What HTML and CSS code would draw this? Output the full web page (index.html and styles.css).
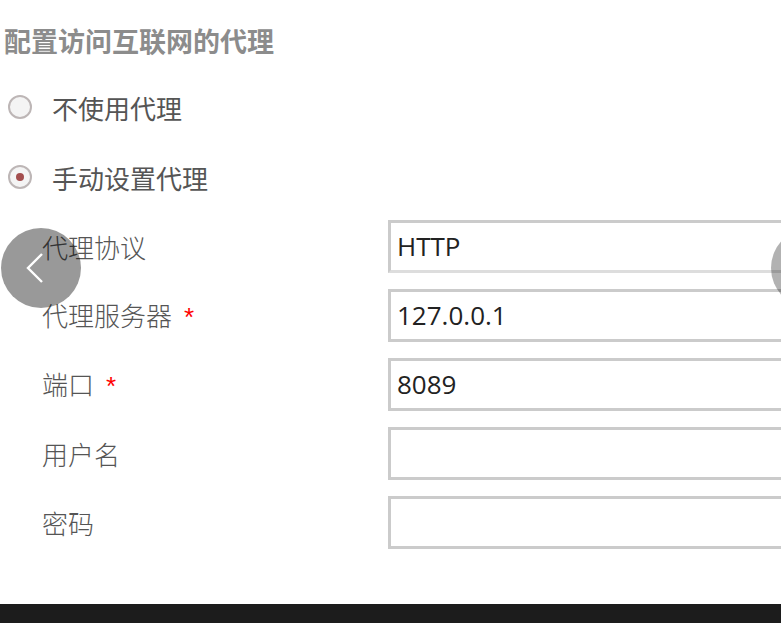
FILE: index.html
```html
<!DOCTYPE html>
<html lang="zh-CN">
<head>
    <meta charset="UTF-8">
    <meta name="viewport" content="width=device-width, initial-scale=1.0">
    <title>代理设置</title>
    <link rel="stylesheet" href="styles.css">
</head>
<body>

<div class="page">
    <h2 class="title">配置访问互联网的代理</h2>

    <label class="radio">
        <span class="radio-dot"></span>
        不使用代理
    </label>
    <label class="radio checked">
        <span class="radio-dot"></span>
        手动设置代理
    </label>

    <div class="form">
        <div class="row">
            <span class="label">代理协议</span>
            <div class="field select">HTTP</div>
        </div>
        <div class="row">
            <span class="label">代理服务器<span class="required">*</span></span>
            <div class="field">127.0.0.1</div>
        </div>
        <div class="row">
            <span class="label">端口<span class="required">*</span></span>
            <div class="field">8089</div>
        </div>
        <div class="row">
            <span class="label">用户名</span>
            <div class="field"></div>
        </div>
        <div class="row">
            <span class="label">密码</span>
            <div class="field"></div>
        </div>
    </div>
</div>

<div class="bottom-bar"></div>

<button class="nav nav-prev" aria-label="上一页">
    <svg width="20" height="34" viewBox="0 0 20 34">
        <polyline points="17,3 3,17 17,31" fill="none" stroke="#fff" stroke-width="2.4"/>
    </svg>
</button>
<div class="nav-next-clip">
    <button class="nav nav-next" aria-label="下一页"></button>
</div>

</body>
</html>
```

FILE: styles.css
```css
:root {
    --label-color: #555;
    --title-color: #8c8c8c;
    --border-color: #cbcbcb;
    --required-color: #f00;
    --bar-color: #1c1c1c;
}

html, body {
    margin: 0;
    height: 100%;
}

body {
    display: flex;
    flex-direction: column;
    background: #fff;
    overflow: hidden;
    font-family: "Noto Sans CJK SC", "Noto Sans", sans-serif;
    color: var(--label-color);
}

.page {
    flex: 1;
    padding-top: 24px;
}

.title {
    margin: 0 0 14px 4px;
    font-size: 27px;
    line-height: 34px;
    font-weight: bold;
    color: var(--title-color);
}

.radio {
    display: flex;
    align-items: center;
    gap: 20px;
    height: 70px;
    padding-left: 8px;
    font-size: 26px;
    color: var(--label-color);
}

.radio-dot {
    width: 20px;
    height: 20px;
    border: 2px solid #bdb6b6;
    border-radius: 50%;
    background: #f4f4f4;
    display: flex;
    align-items: center;
    justify-content: center;
}

.radio.checked .radio-dot::after {
    content: "";
    width: 8px;
    height: 8px;
    border-radius: 50%;
    background: #a34e4e;
}

.form {
    margin-top: 8px;
    display: flex;
    flex-direction: column;
    gap: 16px;
}

.row {
    display: flex;
    align-items: center;
    height: 53px;
}

.label {
    width: 346px;
    padding-left: 42px;
    flex-shrink: 0;
    font-size: 26px;
    line-height: 53px;
    font-weight: 300;
}

.required {
    color: var(--required-color);
    margin-left: 12px;
    font-family: "Liberation Sans", sans-serif;
}

.field {
    flex: 1;
    height: 47px;
    border: 3px solid var(--border-color);
    border-right: none;
    padding-left: 6px;
    font-family: "Open Sans", "Noto Sans", sans-serif;
    font-size: 26px;
    line-height: 47px;
    color: #222;
}

.field.select {
    border-bottom-color: #ddd;
}

.bottom-bar {
    height: 19px;
    background: var(--bar-color);
}

.nav {
    width: 80px;
    height: 80px;
    border: none;
    border-radius: 50%;
    background: rgba(0, 0, 0, 0.4);
    padding: 0;
    display: flex;
    align-items: center;
    justify-content: center;
}

.nav-prev {
    position: absolute;
    top: 228px;
    left: 1px;
}

.nav-prev svg {
    margin-right: 12px;
}

.nav-next-clip {
    position: absolute;
    top: 228px;
    left: 771px;
    width: 10px;
    height: 80px;
    overflow: hidden;
}

.nav-next {
    background: rgba(0, 0, 0, 0.3);
}
```
